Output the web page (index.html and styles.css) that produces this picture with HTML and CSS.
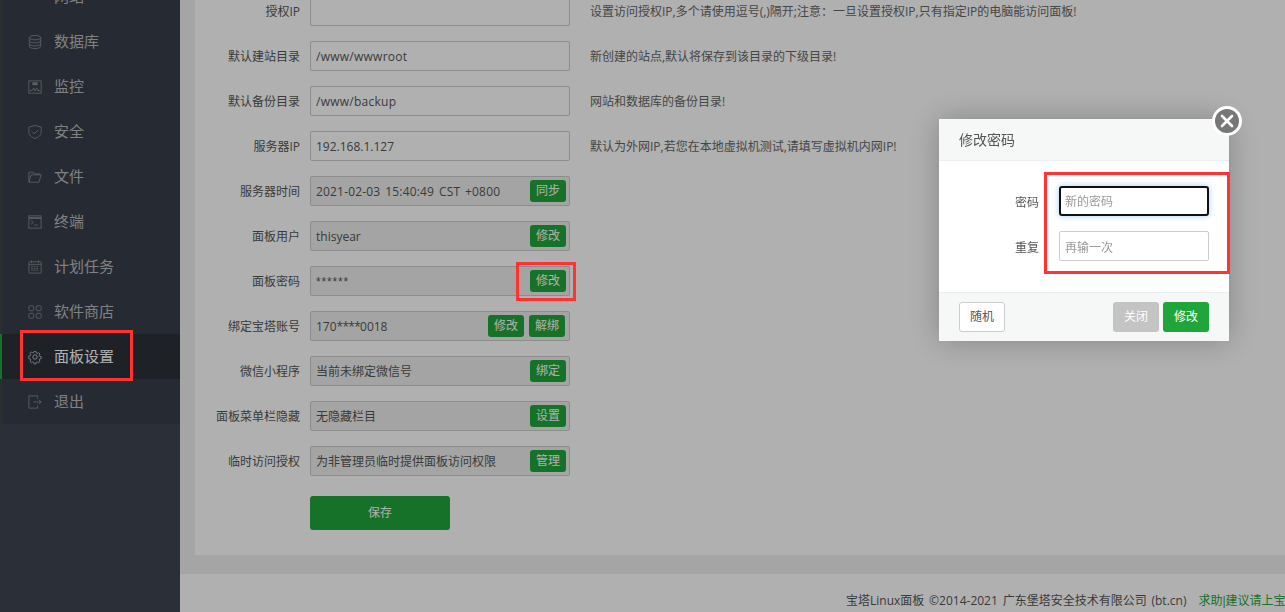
FILE: index.html
```html
<!DOCTYPE html>
<html lang="zh-CN">
<head>
<meta charset="utf-8">
<title>面板设置</title>
<link rel="stylesheet" href="styles.css">
</head>
<body>
<div class="app">
  <aside class="sidebar">
    <nav class="menu">
      <a class="item"><svg class="ico" viewBox="0 0 16 16"><rect x="2" y="-3" width="12" height="7" fill="none" stroke="currentColor"/><path d="M0 3.5h16M8 0v4"  stroke="currentColor" fill="none"/></svg><span>网站</span></a>
      <a class="item"><svg class="ico" viewBox="0 0 16 16" fill="none" stroke="currentColor"><ellipse cx="8" cy="3" rx="6.5" ry="2.5"/><path d="M1.500 3v10c0 1.400 3 2.500 6.500 2.500s6.500-1.100 6.500-2.500V3M1.500 6.500c0 1.400 3 2.500 6.500 2.500s6.500-1.100 6.500-2.500M1.500 10c0 1.400 3 2.500 6.500 2.500s6.500-1.100 6.500-2.500"/></svg><span>数据库</span></a>
      <a class="item"><svg class="ico" viewBox="0 0 16 16" fill="none" stroke="currentColor"><rect x="1" y="1" width="14" height="14"/><path d="M2 12h3l1.500-3 1.500 3.500L10 9l1 3h3"/><rect x="5" y="2.500" width="6" height="3.500" fill="currentColor" stroke="none"/></svg><span>监控</span></a>
      <a class="item"><svg class="ico" viewBox="0 0 16 16" fill="none" stroke="currentColor"><path d="M8 .5 15 2.500v6c0 3-3 5.500-7 7C4 14 1 11.500 1 8.500v-6z"/><path d="m4.500 7.500 2.500 2.500 4.500-4"/></svg><span>安全</span></a>
      <a class="item"><svg class="ico" viewBox="0 0 16 16" fill="none" stroke="currentColor"><path d="M1 14V2.500h5l1.500 2H14"/><path d="M1 14h11.500L15 5.500H3.500z"/></svg><span>文件</span></a>
      <a class="item"><svg class="ico" viewBox="0 0 16 16" fill="none" stroke="currentColor"><rect x="1" y="1" width="14" height="14"/><path d="M1 3.500h14" stroke-width="2"/><path d="m3.500 6.500 2.500 2-2.500 2M7 11.500h4"/></svg><span>终端</span></a>
      <a class="item"><svg class="ico" viewBox="0 0 16 16" fill="none" stroke="currentColor"><rect x="1" y="2" width="14" height="13" rx="1"/><path d="M1 5h14M4 .5v3M12 .5v3"/><path d="M3.500 7.500h9M3.500 9.500h9M3.500 11.500h9" stroke-dasharray="2 1"/></svg><span>计划任务</span></a>
      <a class="item"><svg class="ico" viewBox="0 0 16 16" fill="none" stroke="currentColor"><rect x="1" y="1" width="5.500" height="5.500" rx="1"/><rect x="9.500" y="1" width="5.500" height="5.500" rx="1"/><rect x="1" y="9.500" width="5.500" height="5.500" rx="1"/><rect x="9.500" y="9.500" width="5.500" height="5.500" rx="1"/></svg><span>软件商店</span></a>
      <a class="item current"><svg class="ico" viewBox="0 0 16 16" fill="none" stroke="currentColor"><circle cx="8" cy="8" r="2.500"/><path d="M6.800 1h2.400l.4 2 1.300.6 1.800-1.100 1.700 1.700-1.100 1.800.6 1.300 2 .4v2.400l-2 .4-.6 1.300 1.100 1.800-1.700 1.700-1.800-1.100-1.300.6-.4 2H6.800l-.4-2-1.300-.6-1.800 1.100-1.700-1.700 1.100-1.800-.6-1.300-2-.4V6.800l2-.4.6-1.300-1.100-1.800 1.700-1.700 1.800 1.100 1.300-.6z" transform="translate(.8 .8) scale(.9)"/></svg><span>面板设置</span></a>
      <a class="item"><svg class="ico" viewBox="0 0 16 16" fill="none" stroke="currentColor"><path d="M11 4V1H1v14h10v-3"/><path d="M6 8h9M12.500 5.500 15 8l-2.500 2.500"/></svg><span>退出</span></a>
    </nav>
  </aside>

  <main class="main">
    <section class="panel">
      <div class="row"><label class="lbl">授权IP</label><div class="field"></div><p class="hint">设置访问授权IP,多个请使用逗号(,)隔开;注意：一旦设置授权IP,只有指定IP的电脑能访问面板!</p></div>
      <div class="row"><label class="lbl">默认建站目录</label><div class="field path">/www/wwwroot</div><p class="hint">新创建的站点,默认将保存到该目录的下级目录!</p></div>
      <div class="row"><label class="lbl">默认备份目录</label><div class="field path">/www/backup</div><p class="hint">网站和数据库的备份目录!</p></div>
      <div class="row"><label class="lbl">服务器IP</label><div class="field">192.168.1.127</div><p class="hint">默认为外网IP,若您在本地虚拟机测试,请填写虚拟机内网IP!</p></div>
      <div class="row"><label class="lbl">服务器时间</label><div class="field ro"><span class="val stamp">2021-02-03 15:40:49 CST +0800</span><button class="mini">同步</button></div></div>
      <div class="row"><label class="lbl">面板用户</label><div class="field ro"><span class="val">thisyear</span><button class="mini">修改</button></div></div>
      <div class="row"><label class="lbl">面板密码</label><div class="field ro"><span class="val stars">******</span><button class="mini">修改</button></div></div>
      <div class="row"><label class="lbl">绑定宝塔账号</label><div class="field ro"><span class="val">170<span class="mask">****</span>0018</span><button class="mini">修改</button><button class="mini">解绑</button></div></div>
      <div class="row"><label class="lbl">微信小程序</label><div class="field ro"><span class="val">当前未绑定微信号</span><button class="mini">绑定</button></div></div>
      <div class="row"><label class="lbl">面板菜单栏隐藏</label><div class="field ro"><span class="val">无隐藏栏目</span><button class="mini">设置</button></div></div>
      <div class="row"><label class="lbl">临时访问授权</label><div class="field ro"><span class="val">为非管理员临时提供面板访问权限</span><button class="mini">管理</button></div></div>
      <button class="save">保存</button>
    </section>
    <footer class="foot">
      <span class="copy">宝塔Linux面板 ©2014-2021 广东堡塔安全技术有限公司 (bt.cn)</span><a class="help">求助<span class="sep">|</span>建议请上宝塔论坛</a>
    </footer>
  </main>
</div>

<div class="shade"></div>
<div class="mark mark-nav"></div>
<div class="mark mark-btn"></div>

<div class="dialog">
  <header class="dlg-head">修改密码</header>
  <div class="dlg-body">
    <div class="dlg-row"><label class="dlg-lbl">密码</label><input class="dlg-input focus" placeholder="新的密码"></div>
    <div class="dlg-row"><label class="dlg-lbl">重复</label><input class="dlg-input" placeholder="再输一次"></div>
  </div>
  <div class="dlg-foot">
    <button class="btn plain">随机</button>
    <span class="right"><button class="btn gray">关闭</button><button class="btn green">修改</button></span>
  </div>
  <div class="mark mark-dlg"></div>
  <button class="close" aria-label="关闭"><svg viewBox="0 0 14 14"><path d="M2 2l10 10M12 2 2 12" stroke="#fff" stroke-width="2.600" stroke-linecap="round"/></svg></button>
</div>
</body>
</html>
```
FILE: styles.css
```css
* { box-sizing: border-box; }
html, body { margin: 0; height: 100%; overflow: hidden; }
body { font: 12px/1.4 "Open Sans", "Noto Sans CJK SC", sans-serif; color: #555; background: #f0f0f0; }
.app { display: flex; height: 612px; overflow: hidden; }

.sidebar { width: 180px; flex: none; background: #3d4451; }
.menu { display: flex; flex-direction: column; margin-top: -26px; background: #383f4a; border-left: 2px solid #3f4540; }
.item { display: flex; align-items: center; height: 45px; padding-left: 26px; gap: 12px; font-size: 15px; color: #bbb; }
.item .ico { width: 14px; height: 14px; flex: none; color: #858a90; overflow: visible; }
.current { background: #2c3138; color: #fff; margin-left: -2px; border-left: 2px solid #20a53a; }
.current .ico { color: #ccc; }

.main { flex: 1; min-width: 0; display: flex; flex-direction: column; padding-left: 15px; background: #f0f0f0; }
.panel { background: #fff; height: 559px; flex: none; margin-top: -4px; }
.row { display: flex; align-items: center; height: 30px; margin-bottom: 15px; white-space: nowrap; }
.lbl { width: 105px; padding-top: 2px; text-align: right; color: #555; flex: none; }
.field { width: 260px; height: 30px; margin-left: 10px; flex: none; border: 1px solid #ccc; border-radius: 2px; padding: 2px 5px 0; display: flex; align-items: center; color: #555; background: #fff; }
.path { letter-spacing: .26px; }
.ro { background: #eee; padding-right: 3px; gap: 4px; }
.val { flex: 1; min-width: 0; }
.stamp { letter-spacing: .18px; word-spacing: 1.5px; }
.stars { font-family: "Liberation Sans", sans-serif; letter-spacing: .85px; }
.mask { letter-spacing: -.75px; }
.hint { margin: 0 0 0 20px; padding-top: 2px; color: #666; }
.mini { height: 22px; width: 36px; margin-top: -2px; padding: 1px 0 0; border: 0; border-radius: 3px; background: #20a53a; color: #fff; font: inherit; }
.mini + .mini { margin-left: 1px; margin-right: 1px; }
.save { display: block; width: 140px; height: 34px; margin: 5px 0 0 115px; padding: 1px 0 0; border: 0; border-radius: 3px; background: #20a53a; color: #fff; font: inherit; }
.row:last-of-type { margin-bottom: 20px; }

.foot { flex: 1; margin: 19px 0 0 -15px; padding: 19px 0 0 666px; white-space: nowrap; overflow: hidden; font-size: 12px; color: #555; background: #fff; }
.copy { color: #555; word-spacing: 1.7px; }
.help { color: #20a53a; margin-left: 12px; }
.sep { font-family: "Liberation Sans", sans-serif; }

.shade { position: fixed; inset: 0; background: rgba(0,0,0,.31); }
.mark { position: fixed; border: 3px solid #ff3333; }
.mark-nav { left: 20px; top: 330px; width: 113px; height: 51px; }
.mark-btn { left: 516px; top: 262px; width: 60px; height: 39px; }

.dialog { position: fixed; left: 939px; top: 119px; width: 290px; height: 222px; background: #fff; box-shadow: 0 0 30px rgba(0,0,0,.25); display: flex; flex-direction: column; }
.dlg-head { height: 42px; flex: none; padding: 0 20px; display: flex; align-items: center; font-size: 14px; color: #555; background: #f6f8f8; border-bottom: 1px solid #eee; }
.dlg-body { flex: 1; padding-top: 25px; }
.dlg-row { display: flex; align-items: center; height: 30px; margin-bottom: 15px; }
.dlg-lbl { width: 100px; padding-top: 4px; text-align: right; color: #555; flex: none; }
.dlg-input { width: 150px; height: 30px; margin-left: 20px; padding: 2px 5px 0; border: 1px solid #ccc; border-radius: 2px; font: inherit; color: #555; outline: none; }
.dlg-input::placeholder { color: #999; opacity: 1; }
.focus { border: 2px solid #111; border-radius: 3px; padding: 0 4px; box-shadow: 0 0 6px rgba(102,175,233,.6); }
.dlg-foot { height: 49px; flex: none; padding: 0 20px; display: flex; align-items: center; justify-content: space-between; background: #f6f8f8; border-top: 1px solid #eee; }
.right { display: flex; gap: 4px; }
.btn { height: 30px; width: 46px; padding: 0; border-radius: 3px; border: 1px solid transparent; font: inherit; }
.plain { background: #fff; border-color: #ccc; color: #555; }
.gray { background: #c4c4c4; color: #fff; }
.green { background: #20a53a; color: #fff; }
.mark-dlg { position: absolute; left: 105px; top: 53px; width: 186px; height: 102px; }
.close { position: absolute; right: -13px; top: -13px; width: 30px; height: 30px; padding: 0; border: 3px solid #fff; border-radius: 50%; background: #777; display: flex; align-items: center; justify-content: center; }
.close svg { width: 14px; height: 14px; }
```
